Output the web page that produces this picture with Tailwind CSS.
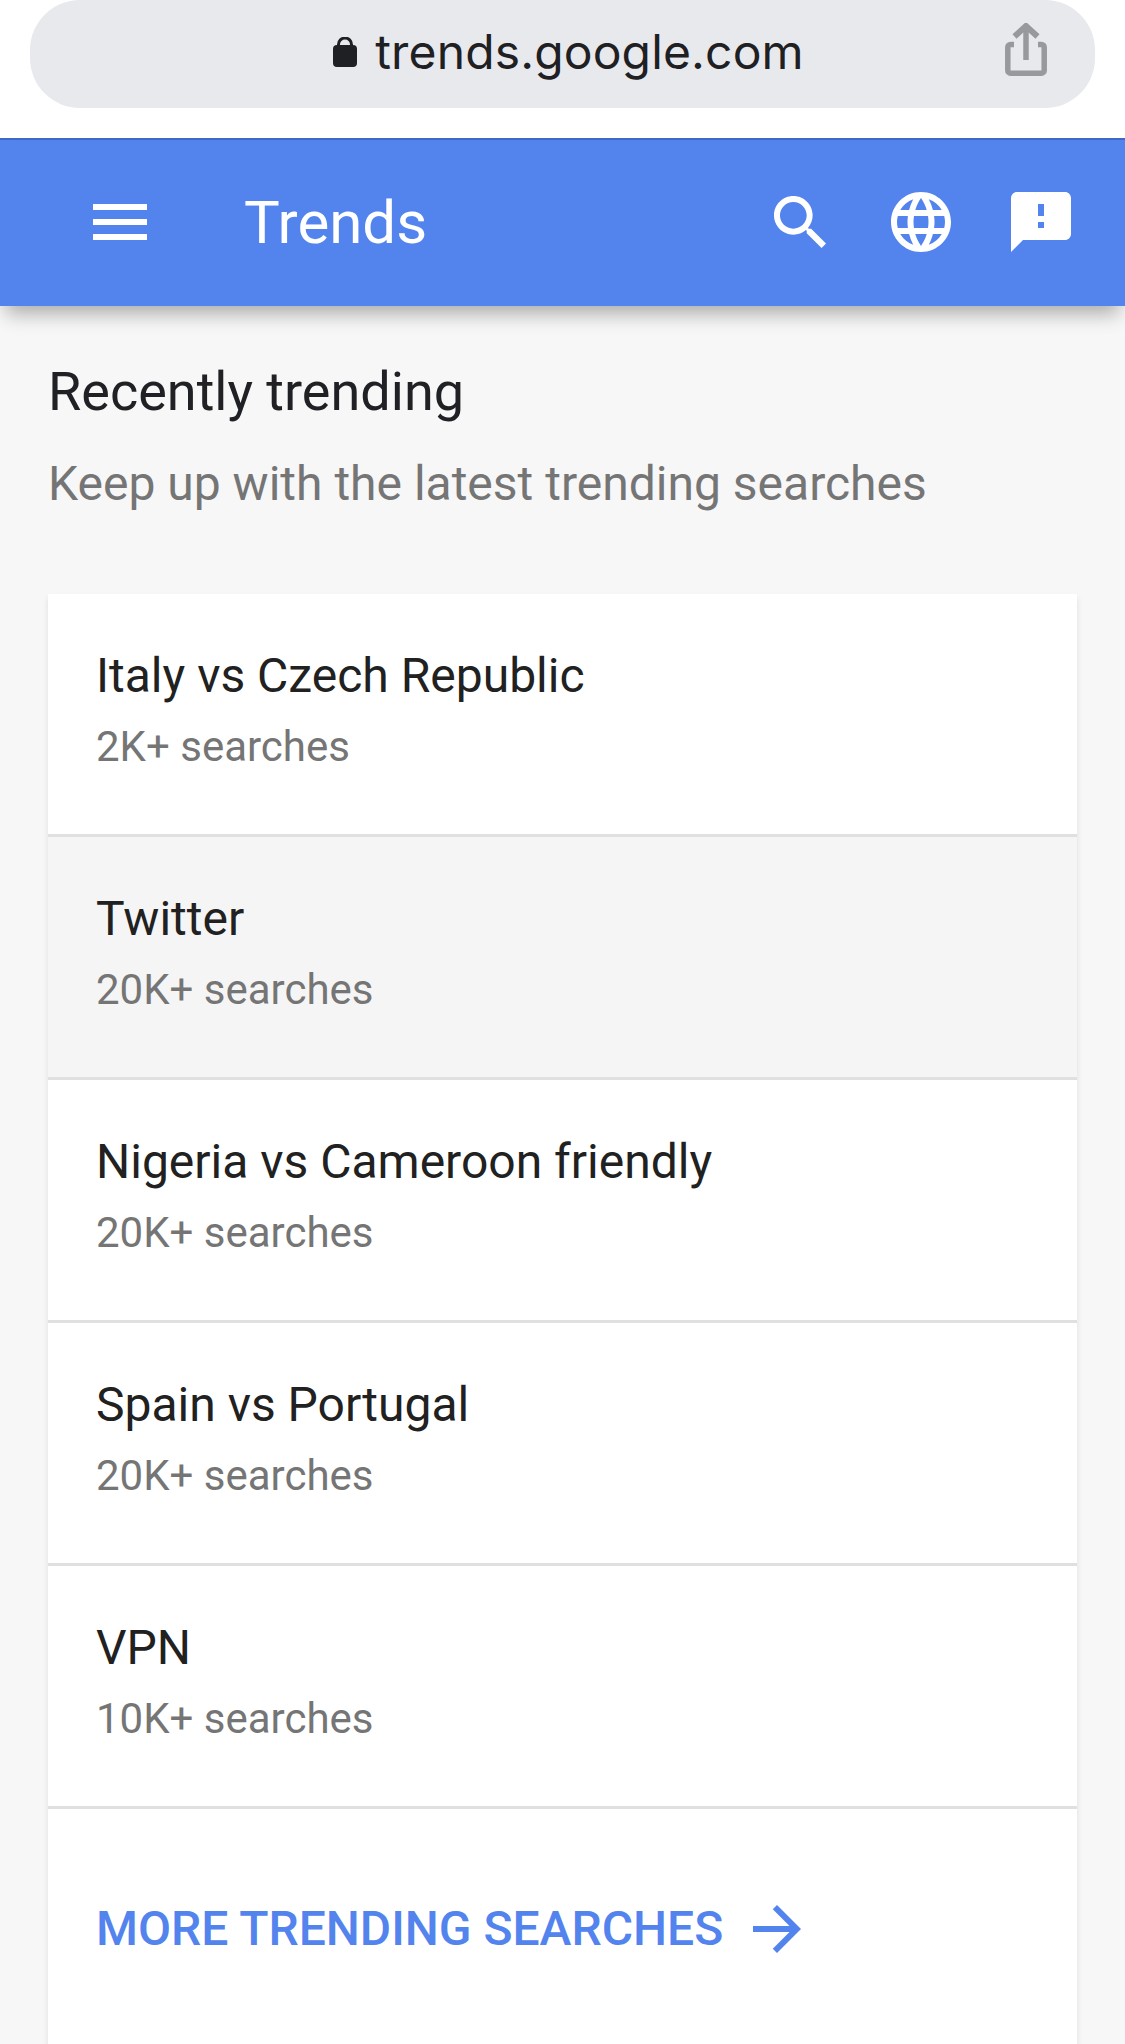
<!DOCTYPE html>
<html>
<head>
<meta charset="utf-8">
<script src="https://cdn.jsdelivr.net/npm/@tailwindcss/browser@4"></script>
</head>
<body class="m-0 bg-white">
<div class="w-[1125px] h-[2044px] overflow-hidden flex flex-col bg-[#f7f7f7] font-['Roboto',sans-serif]">
  <div class="h-[138px] bg-white px-[30px] shrink-0">
    <div class="relative h-[108px] rounded-[50px] bg-[#e8e9ed] flex items-center justify-center pb-[5px] pl-[12px] font-['Inter','Roboto',sans-serif] text-[48px] tracking-[0.15px] text-[#1f2023]">
      <svg class="w-[24px] h-[30px] mr-[18px] mt-[1px]" viewBox="0 0 24 30" fill="none"><rect x="0" y="8" width="24" height="22" rx="4" fill="#1f2023"/><path d="M5.5 10V7.5a6.5 6.5 0 0 1 13 0V10" stroke="#1f2023" stroke-width="3"/></svg>
      <span>trends.google.com</span>
      <svg class="absolute right-[48px] top-[23px] w-[42px] h-[53px]" viewBox="0 0 42 53" fill="none"><path d="M9 21.5H5.5a2.7 2.7 0 0 0-2.7 2.7V47.5a2.7 2.7 0 0 0 2.7 2.7H36.5a2.7 2.7 0 0 0 2.7-2.7V24.2a2.7 2.7 0 0 0-2.7-2.7H33" stroke="#98999c" stroke-width="5.5"/><path d="M21 37V4" stroke="#98999c" stroke-width="5.5"/><path d="M9.5 13.5 21 3 32.5 13.5" stroke="#98999c" stroke-width="6"/></svg>
    </div>
  </div>
  <header class="h-[168px] shrink-0 bg-[#5384ee] border-t-2 border-[#3f68c4] pb-[2px] shadow-[0_14px_18px_-6px_rgba(0,0,0,0.3)] relative z-10 flex items-center text-white">
    <svg class="ml-[93px] w-[54px] h-[36px] shrink-0" viewBox="3 6 18 12" fill="white"><path d="M3 18h18v-2H3v2zm0-5h18v-2H3v2zm0-7v2h18V6H3z"/></svg>
    <div class="ml-[97px] mt-[2px] text-[60px] leading-none">Trends</div>
    <div class="ml-auto flex items-center mr-[54px]">
      <svg class="w-[52px] h-[52px]" viewBox="3 3 17.49 17.49" fill="white"><path d="M15.5 14h-.79l-.28-.27C15.41 12.59 16 11.11 16 9.5 16 5.91 13.09 3 9.5 3S3 5.91 3 9.5 5.91 16 9.5 16c1.61 0 3.09-.59 4.23-1.57l.27.28v.79l5 4.99L20.49 19l-4.99-5zm-6 0C7.01 14 5 11.99 5 9.5S7.01 5 9.5 5 14 7.01 14 9.5 11.99 14 9.5 14z"/></svg>
      <svg class="ml-[65px] w-[60px] h-[60px]" viewBox="2 2 20 20" fill="white"><path d="M11.99 2C6.47 2 2 6.48 2 12s4.47 10 9.99 10C17.52 22 22 17.52 22 12S17.52 2 11.99 2zm6.93 6h-2.95c-.32-1.25-.78-2.45-1.38-3.56 1.84.63 3.37 1.91 4.33 3.56zM12 4.04c.83 1.2 1.48 2.53 1.91 3.96h-3.82c.43-1.43 1.08-2.76 1.91-3.96zM4.26 14C4.1 13.36 4 12.69 4 12s.1-1.36.26-2h3.38c-.08.66-.14 1.32-.14 2 0 .68.06 1.34.14 2H4.26zm.82 2h2.95c.32 1.25.78 2.45 1.38 3.56-1.84-.63-3.37-1.9-4.33-3.56zm2.95-8H5.08c.96-1.66 2.49-2.93 4.33-3.56C8.81 5.55 8.35 6.75 8.03 8zM12 19.96c-.83-1.2-1.48-2.53-1.91-3.96h3.82c-.43 1.43-1.08 2.76-1.91 3.96zM14.34 14H9.66c-.09-.66-.16-1.32-.16-2 0-.68.07-1.35.16-2h4.68c.09.65.16 1.32.16 2 0 .68-.07 1.34-.16 2zm.25 5.56c.6-1.11 1.06-2.31 1.38-3.56h2.95c-.96 1.65-2.49 2.93-4.33 3.56zM16.36 14c.08-.66.14-1.32.14-2 0-.68-.06-1.34-.14-2h3.38c.16.64.26 1.31.26 2s-.1 1.36-.26 2h-3.38z"/></svg>
      <svg class="ml-[60px] w-[60px] h-[60px]" viewBox="2 2 20 20" fill="white"><path d="M20 2H4c-1.1 0-1.99.9-1.99 2L2 22l4-4h14c1.1 0 2-.9 2-2V4c0-1.1-.9-2-2-2zm-7 12h-2v-2h2v2zm0-4h-2V6h2v4z"/></svg>
    </div>
  </header>
  <main class="flex-1 min-h-0 pl-[48px] pr-[48px]">
    <h1 class="mt-[56px] text-[54px] leading-[60px] text-[#202124] font-normal">Recently trending</h1>
    <p class="mt-[32px] text-[48px] leading-[60px] text-[#757575]">Keep up with the latest trending searches</p>
    <div class="mt-[80px] bg-white shadow-[0_4px_6px_rgba(0,0,0,0.1)] h-[1500px]">
      <div class="h-[243px] border-b-[3px] border-[#e0e0e0] pl-[48px] pt-[52px]">
        <div class="text-[48px] leading-[60px] text-[#212121]">Italy vs Czech Republic</div>
        <div class="mt-[16px] text-[42px] leading-[50px] text-[#757575]">2K+ searches</div>
      </div>
      <div class="h-[243px] border-b-[3px] border-[#e0e0e0] pl-[48px] pt-[52px] bg-[#f5f5f5]">
        <div class="text-[48px] leading-[60px] text-[#212121]">Twitter</div>
        <div class="mt-[16px] text-[42px] leading-[50px] text-[#757575]">20K+ searches</div>
      </div>
      <div class="h-[243px] border-b-[3px] border-[#e0e0e0] pl-[48px] pt-[52px]">
        <div class="text-[48px] leading-[60px] text-[#212121]">Nigeria vs Cameroon friendly</div>
        <div class="mt-[16px] text-[42px] leading-[50px] text-[#757575]">20K+ searches</div>
      </div>
      <div class="h-[243px] border-b-[3px] border-[#e0e0e0] pl-[48px] pt-[52px]">
        <div class="text-[48px] leading-[60px] text-[#212121]">Spain vs Portugal</div>
        <div class="mt-[16px] text-[42px] leading-[50px] text-[#757575]">20K+ searches</div>
      </div>
      <div class="h-[243px] border-b-[3px] border-[#e0e0e0] pl-[48px] pt-[52px]">
        <div class="text-[48px] leading-[60px] text-[#212121]">VPN</div>
        <div class="mt-[16px] text-[42px] leading-[50px] text-[#757575]">10K+ searches</div>
      </div>
      <div class="pl-[48px] pt-[90px] flex items-center text-[#5384ee]">
        <span class="text-[48px] leading-[60px] font-medium">MORE TRENDING SEARCHES</span>
        <svg class="ml-[30px] w-[48px] h-[48px]" viewBox="4 4 16 16" fill="#5384ee"><path d="M12 4l-1.41 1.41L16.17 11H4v2h12.17l-5.58 5.59L12 20l8-8z"/></svg>
      </div>
    </div>
  </main>
</div>
</body>
</html>
